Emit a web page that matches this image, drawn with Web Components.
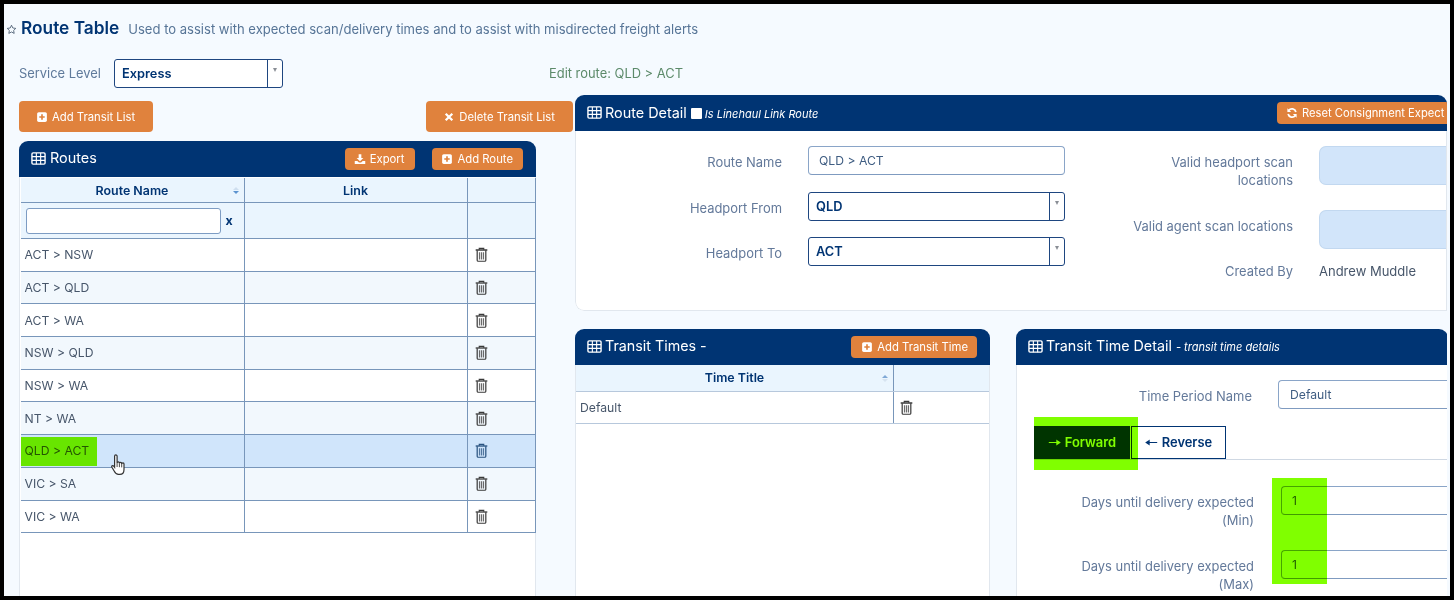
<!DOCTYPE html>
<html lang="en">
<head>
<meta charset="utf-8">
<title>Route Table</title>
<style>
  html, body { margin: 0; padding: 0; height: 600px; overflow: hidden; }
  body { font-family: Inter, "Liberation Sans", sans-serif; font-size: 12.2px; color: #47566a; }
  .cols { display: flex; margin-top: 7px; margin-left: 15px; height: 501px; }
  .left { width: 554px; flex: none; padding-top: 6px; box-sizing: border-box; }
  .btn-row { display: flex; justify-content: space-between; align-items: flex-start; margin-bottom: 9px; }
  .right { width: 872px; flex: none; margin-left: 2px; overflow: hidden; }
  .routes { width: 517px; height: 470px; --title-gap: 4px; }
  .lower { display: flex; margin-top: 18px; }
  .times { width: 415px; flex: none; height: 300px; --title-size: 14.3px; }
  .detail { width: 432px; flex: none; margin-left: 26px; height: 300px; --title-size: 14.3px; }
  .big { --btn-h: 31px; --btn-pad-l: 17px; --btn-pad-r: 18px; --btn-font: 11.3px; }
  .sm { --btn-h: 22px; --btn-pad-l: 9px; --btn-pad-r: 10px; --btn-font: 11.3px; }
  .gap-l { margin-left: 17px; }
  .note { font-size: 11px; font-style: italic; margin-left: 3px; }
  .detail-body { display: flex; padding: 15px 0 0 0; height: 164px; }
  .stack-a { width: 489px; flex: none; display: flex; flex-direction: column; gap: 16.5px; --label-w: 206px; --ctl-w: 257px; }
  .stack-b { flex: 1; display: flex; flex-direction: column; gap: 21px; --label-w: 228px; }
  .stack-b form-row:last-child { margin-top: -15px; }
  .value { display: block; padding-top: 7px; line-height: 18px; font-size: 13px; color: #47566a; }
  .tt-body { padding-top: 15px; }
  .tt-days { display: flex; flex-direction: column; gap: 21px; margin-top: 26px; }
  tab-bar { margin: 17px 0 0 17px; }
</style>
</head>
<body>

<app-frame>
  <page-title heading="Route Table">Used to assist with expected scan/delivery times and to assist with misdirected freight alerts</page-title>

  <service-bar hint="Edit route: QLD &gt; ACT" label="Service Level">
    <sel-box style="width:169px;--sel-lh:28px">Express</sel-box>
  </service-bar>

  <div class="cols">
    <div class="left">
      <div class="btn-row">
        <o-btn class="big" icon="plus">Add Transit List</o-btn>
        <o-btn class="big" icon="times">Delete Transit List</o-btn>
      </div>
      <panel-box class="routes">
        <span slot="title">Routes</span>
        <o-btn slot="actions" class="sm" icon="download" style="--btn-pad-r:11px">Export</o-btn>
        <o-btn slot="actions" class="sm gap-l" icon="plus">Add Route</o-btn>
        <data-table style="--cols:224px 223px 68px; margin:1px 0 0 .5px; width:516px">
          <data-row kind="head" style="--h:25px"><t-cell head sort="down">Route Name</t-cell><t-cell head>Link</t-cell><t-cell head></t-cell></data-row>
          <data-row kind="filter" style="--h:36px"><t-cell pad="5"><filter-box></filter-box></t-cell><t-cell></t-cell><t-cell></t-cell></data-row>
          <data-row><t-cell>ACT &gt; NSW</t-cell><t-cell></t-cell><t-cell trash></t-cell></data-row>
          <data-row kind="alt"><t-cell>ACT &gt; QLD</t-cell><t-cell></t-cell><t-cell trash></t-cell></data-row>
          <data-row><t-cell>ACT &gt; WA</t-cell><t-cell></t-cell><t-cell trash></t-cell></data-row>
          <data-row kind="alt"><t-cell>NSW &gt; QLD</t-cell><t-cell></t-cell><t-cell trash></t-cell></data-row>
          <data-row><t-cell>NSW &gt; WA</t-cell><t-cell></t-cell><t-cell trash></t-cell></data-row>
          <data-row kind="alt"><t-cell>NT &gt; WA</t-cell><t-cell></t-cell><t-cell trash></t-cell></data-row>
          <data-row kind="sel"><t-cell>QLD &gt; ACT</t-cell><t-cell></t-cell><t-cell trash></t-cell></data-row>
          <data-row kind="alt"><t-cell>VIC &gt; SA</t-cell><t-cell></t-cell><t-cell trash></t-cell></data-row>
          <data-row><t-cell>VIC &gt; WA</t-cell><t-cell></t-cell><t-cell trash></t-cell></data-row>
        </data-table>
      </panel-box>
    </div>

    <div class="right">
      <panel-box style="--title-shift:-1px">
        <span slot="title">Route Detail<check-mark></check-mark><span class="note">Is Linehaul Link Route</span></span>
        <o-btn slot="actions" clipped icon="refresh" style="--btn-h:22px;--btn-pad-l:9px;--btn-pad-r:0px;--btn-font:11.2px">Reset Consignment Expect</o-btn>
        <div class="detail-body">
          <div class="stack-a">
            <form-row label="Route Name"><text-box>QLD &gt; ACT</text-box></form-row>
            <form-row label="Headport From"><sel-box>QLD</sel-box></form-row>
            <form-row label="Headport To"><sel-box>ACT</sel-box></form-row>
          </div>
          <div class="stack-b">
            <form-row><span slot="label">Valid headport scan<br>locations</span><fill-box></fill-box></form-row>
            <form-row label="Valid agent scan locations"><fill-box></fill-box></form-row>
            <form-row label="Created By"><span class="value">Andrew Muddle</span></form-row>
          </div>
        </div>
      </panel-box>

      <div class="lower">
        <panel-box class="times">
          <span slot="title">Transit Times -</span>
          <o-btn slot="actions" class="sm" icon="plus" style="--btn-pad-l:10px;--btn-pad-r:9px">Add Transit Time</o-btn>
          <data-table style="--cols:318px 96px; --line-h:#b7c8dc">
            <data-row kind="head" style="--h:27px"><t-cell head sort="up" style="padding-bottom:2px">Time Title</t-cell><t-cell head style="border-right:0"></t-cell></data-row>
            <data-row style="--h:32px"><t-cell pad="4">Default</t-cell><t-cell trash="5" style="border-right:0"></t-cell></data-row>
          </data-table>
        </panel-box>

        <panel-box class="detail">
          <span slot="title">Transit Time Detail<span class="note" style="margin-left:4px">- transit time details</span></span>
          <div class="tt-body">
            <form-row label="Time Period Name" style="--label-w:235px"><text-box open>Default</text-box></form-row>
            <tab-bar>
              <tab-btn active dir="right">Forward</tab-btn>
              <tab-btn dir="left">Reverse</tab-btn>
            </tab-bar>
            <div class="tt-days">
              <form-row style="--label-w:237px;--label-gap:27px"><span slot="label">Days until delivery expected<br>(Min)</span><text-box open style="--box-pad:10px">1</text-box></form-row>
              <form-row style="--label-w:237px;--label-gap:27px"><span slot="label">Days until delivery expected<br>(Max)</span><text-box open style="--box-pad:10px">1</text-box></form-row>
            </div>
          </div>
        </panel-box>
      </div>
    </div>
  </div>

  <hi-lite style="left:17px;top:433px;width:76px;height:29px"></hi-lite>
  <hi-lite style="left:1030px;top:413px;width:104px;height:53px"></hi-lite>
  <hi-lite style="left:1268px;top:474px;width:55px;height:106px"></hi-lite>
  <hand-cursor style="left:107px;top:450px"></hand-cursor>
</app-frame>

<script>
const ICONS = {
  grid: '<rect x="1" y="2" width="14" height="12" rx="1.2" fill="none" stroke="currentColor" stroke-width="1.5"/><path d="M1 6h14M1 10h14M5.7 2v12M10.3 2v12" stroke="currentColor" stroke-width="1.2" fill="none"/>',
  plus: '<rect x="1.5" y="1.5" width="13" height="13" rx="2.2" fill="currentColor"/><path d="M8 4.4v7.2M4.4 8h7.2" stroke="#e0823d" stroke-width="2.2"/>',
  times: '<path d="M3.6 3.6l8.8 8.8M12.4 3.6l-8.8 8.8" stroke="currentColor" stroke-width="3" fill="none"/>',
  download: '<path d="M6.2 1.5h3.6v5.2h2.7L8 11 3.5 6.7h2.7z" fill="currentColor"/><path d="M1 10.5h3.4L6.6 12.6h2.8L11.6 10.5H15V14.5H1z" fill="currentColor"/>',
  refresh: '<path d="M13.2 6.6A5.4 5.4 0 0 0 3.6 4.7" fill="none" stroke="currentColor" stroke-width="2.4"/><path d="M1.8 1.6v5h5z" fill="currentColor"/><path d="M2.8 9.4a5.4 5.4 0 0 0 9.6 1.9" fill="none" stroke="currentColor" stroke-width="2.4"/><path d="M14.2 14.4v-5h-5z" fill="currentColor"/>',
  trash: '<path d="M5.6 3V1.5h4.8V3" fill="none" stroke="currentColor" stroke-width="1.2"/><path d="M1.8 3.2h12.4" stroke="currentColor" stroke-width="1.4"/><path d="M3.4 3.4V14a1.2 1.2 0 0 0 1.2 1.2h6.8a1.2 1.2 0 0 0 1.2-1.2V3.4" fill="none" stroke="currentColor" stroke-width="1.3"/><path d="M5.9 5.6v7.6M8 5.6v7.6M10.1 5.6v7.6" stroke="currentColor" stroke-width="1.3" opacity=".75"/>',
  star: '<path d="M8 1.8l1.9 4 4.3.6-3.1 3 .8 4.3L8 11.6l-3.9 2.1.8-4.3-3.1-3 4.3-.6z" fill="none" stroke="currentColor" stroke-width="1.2"/>',
  right: '<path d="M1 8h13M11 5.8L14.4 8 11 10.2z" stroke="currentColor" stroke-width="1.5" fill="currentColor"/>',
  left: '<path d="M15 8H2M5 5.8L1.6 8 5 10.2z" stroke="currentColor" stroke-width="1.5" fill="currentColor"/>'
};

function define(name, css, html, extra) {
  const tpl = document.createElement('template');
  tpl.innerHTML = '<style>' + css + '</style>' + html;
  customElements.define(name, class extends HTMLElement {
    constructor() {
      super();
      this.attachShadow({ mode: 'open' }).appendChild(tpl.content.cloneNode(true));
    }
    connectedCallback() { if (extra) extra.call(this, this.shadowRoot); }
  });
}

define('ui-icon', ':host{display:inline-block;width:var(--s,12px);height:var(--s,12px);flex:none;line-height:0}svg{width:100%;height:100%;display:block}', '<svg viewBox="0 0 16 16"></svg>', function (r) {
  r.querySelector('svg').innerHTML = ICONS[this.getAttribute('name')] || '';
});

define('app-frame', ':host{display:block;box-sizing:border-box;width:1454px;height:600px;border:4px solid #000;background:#f5faff;overflow:hidden;position:relative}', '<slot></slot>');

define('page-title',
  ':host{display:flex;align-items:center;height:48px;padding-left:2px;color:#003473}ui-icon{--s:11px;color:#44566c;margin-right:4px;margin-top:2px}h1{margin:0;font-size:17.3px;font-weight:600;line-height:1;white-space:nowrap}p{margin:2px 0 0 9px;font-size:13.06px;color:#577597;white-space:nowrap}',
  '<ui-icon name="star"></ui-icon><h1></h1><p><slot></slot></p>',
  function (r) { r.querySelector('h1').textContent = this.getAttribute('heading'); });

define('service-bar',
  ':host{display:flex;align-items:flex-start;margin-top:7px;padding-left:15px;height:29px}label{width:95px;flex:none;line-height:30px;color:#5f7a9b;font-size:12.9px}.h{margin-left:266px;line-height:30px;color:#5c8a6a;font-size:12.9px;white-space:nowrap}',
  '<label></label><slot></slot><span class="h"></span>',
  function (r) {
    r.querySelector('label').textContent = this.getAttribute('label');
    r.querySelector('.h').textContent = this.getAttribute('hint');
  });

define('sel-box',
  ':host{display:flex;box-sizing:border-box;height:29px;border:1px solid #1e4680;border-radius:3px;background:#fff;color:#003473;font-weight:600;font-size:12.8px;line-height:var(--sel-lh,27px)}.t{flex:1;padding-left:7px}.a{width:15px;border-left:1px solid #1e4680;display:flex;justify-content:center;padding-top:8px;box-sizing:border-box}.a i{width:0;height:0;border:2.5px solid transparent;border-top:4px solid #8a8f96;border-bottom:0}',
  '<span class="t"><slot></slot></span><span class="a"><i></i></span>');

define('text-box',
  ':host{display:block;box-sizing:border-box;height:29px;border:1px solid #8aa5c8;border-bottom-color:#7f9bc0;border-radius:4px;background:#fff;color:#3f5d82;font-size:12.2px;line-height:27px;padding-left:10px}:host([open]){border-right:0;border-radius:4px 0 0 4px;padding-left:var(--box-pad,11px)}',
  '<slot></slot>');

define('fill-box', ':host{display:block;height:39px;background:#d2e5fa;border-radius:7px 0 0 7px;border:1px solid #c2d8f0;border-right:0;box-sizing:border-box}', '');

define('check-mark', ':host{display:inline-block;width:11px;height:11px;background:#fff;border-radius:1px;vertical-align:-1px;margin:0 0 0 4px}', '');

define('filter-box',
  ':host{display:flex;align-items:center;width:100%}i{display:block;width:195px;height:26px;box-sizing:border-box;background:#fff;border:1px solid #7d9cc3;border-radius:3px;flex:none}b{margin-left:5px;color:#003473;font-size:12.4px;font-weight:700}',
  '<i></i><b>x</b>');

define('o-btn',
  ':host{display:inline-flex;align-items:center;box-sizing:border-box;height:var(--btn-h,22px);padding:0 var(--btn-pad-r,10px) 0 var(--btn-pad-l,9px);background:#e0823d;color:#fff;font-size:var(--btn-font,11.3px);border-radius:4px;white-space:nowrap;flex:none}:host([clipped]){border-radius:4px 0 0 4px;width:170px;overflow:hidden}ui-icon{--s:12px;margin-right:4px}',
  '<ui-icon></ui-icon><slot></slot>',
  function (r) { r.querySelector('ui-icon').setAttribute('name', this.getAttribute('icon')); r.querySelector('ui-icon').connectedCallback(); });

define('panel-box',
  ':host{display:flex;flex-direction:column;box-sizing:border-box;background:#fff;border-radius:9px 9px 0 9px;overflow:hidden}header{display:flex;flex:none;align-items:center;height:36px;background:#003473;color:#fff;padding-left:12px;font-size:var(--title-size,14.4px);white-space:nowrap}ui-icon{--s:15px;margin-right:var(--title-gap,3px);margin-top:-2px}.t{flex:1;margin-top:var(--title-shift,-3px)}.a{display:flex;align-items:center;padding-right:var(--act-r,13px)}.b{flex:1;border:1px solid #e1e7ee;border-top:0;border-radius:0 0 0 9px}',
  '<header><ui-icon name="grid"></ui-icon><span class="t"><slot name="title"></slot></span><span class="a"><slot name="actions"></slot></span></header><div class="b"><slot></slot></div>',
  function (r) {
    if (this.querySelector('[clipped]')) r.querySelector('.a').style.paddingRight = '0';
  });

define('data-table', ':host{display:block;font-size:12.2px}', '<slot></slot>');

define('data-row',
  ':host{display:grid;grid-template-columns:var(--cols);height:var(--h,32.7px);box-sizing:border-box;border-bottom:1px solid var(--line-h,#7896ba);background:#fff}:host([kind=head]),:host([kind=filter]){background:#eaf5fe}:host([kind=alt]){background:#f2f8fd}:host([kind=sel]){background:#d0e5fb}',
  '<slot></slot>');

define('t-cell',
  ':host{display:flex;align-items:center;box-sizing:border-box;border-right:1px solid #7896ba;padding-left:4px;color:#47566a;position:relative;min-width:0}:host([head]){justify-content:center;color:#003473;font-weight:600;font-size:12.4px;padding-left:0}.s{position:absolute;right:5px;top:50%;margin-top:-3px;display:none;flex-direction:column;gap:1px}.s i{width:0;height:0;border:3px solid transparent;display:block}.s .u{border-bottom:3px solid #cfdfef;border-top:0}.s .d{border-top:3px solid #5c93cf;border-bottom:0}:host([sort=up]) .u{border-bottom-color:#7fa8d6}:host([sort=up]) .d{border-top-color:#d6e3f0}ui-icon{--s:15px;color:#3a3a3a;display:none}',
  '<slot></slot><ui-icon name="trash"></ui-icon><span class="s"><i class="u"></i><i class="d"></i></span>',
  function (r) {
    if (this.hasAttribute('sort')) r.querySelector('.s').style.display = 'flex';
    if (this.hasAttribute('trash')) {
      r.querySelector('ui-icon').style.display = 'inline-block';
      this.style.paddingLeft = (this.getAttribute('trash') || '6') + 'px';
    }
    if (this.hasAttribute('pad')) this.style.paddingLeft = this.getAttribute('pad') + 'px';
    if (this.closest('data-row[kind=sel]')) r.querySelector('ui-icon').style.color = '#27527f';
  });

define('form-row',
  ':host{display:grid;grid-template-columns:var(--label-w,200px) var(--ctl-w,minmax(0,1fr));column-gap:var(--label-gap,26px);align-items:start}.l{display:block;text-align:right;padding-top:7px;line-height:18px;color:#63799a;font-size:12.95px;white-space:nowrap}',
  '<span class="l"><slot name="label"></slot></span><div><slot></slot></div>',
  function (r) {
    const l = this.getAttribute('label');
    if (l) r.querySelector('slot[name=label]').textContent = l;
  });

define('tab-bar', ':host{display:flex;align-items:flex-end;height:33px;border-bottom:1px solid #cfd8e3}', '<slot></slot>');

define('tab-btn',
  ':host{display:flex;align-items:center;justify-content:center;gap:4px;box-sizing:border-box;height:33px;width:95px;margin-right:1px;border:1px solid #003473;background:#fff;color:#003473;font-weight:600;font-size:12.9px}:host([active]){background:#003473;color:#fff;width:96px}ui-icon{--s:13px}',
  '<ui-icon></ui-icon><slot></slot>',
  function (r) { const i = r.querySelector('ui-icon'); i.setAttribute('name', this.getAttribute('dir')); i.connectedCallback(); });

define('hi-lite', ':host{position:absolute;display:block;background:#80ff00;mix-blend-mode:multiply;pointer-events:none}', '');

define('hand-cursor',
  ':host{position:absolute;display:block;width:15px;height:22px}svg{display:block;width:100%;height:100%}',
  '<svg viewBox="0 0 15 22"><path d="M3.6 2.2a1.25 1.25 0 0 1 2.5 0V9a1.15 1.15 0 0 1 2.3.1v.3a1.15 1.15 0 0 1 2.3.1v.5a1.15 1.15 0 0 1 2.3.2v5.2c0 2.8-1.5 5-4.2 5H7.4c-2 0-3.1-1.1-4.1-3.1L.9 13.2c-.7-1.3.9-2.3 1.8-1.1l.9 1.2z" fill="#fff" stroke="#333" stroke-width="1.2"/><path d="M6.1 9v4M8.4 9.4v3.8M10.7 10v3.4" stroke="#333" stroke-width=".9" fill="none"/></svg>');
</script>
</body>
</html>
